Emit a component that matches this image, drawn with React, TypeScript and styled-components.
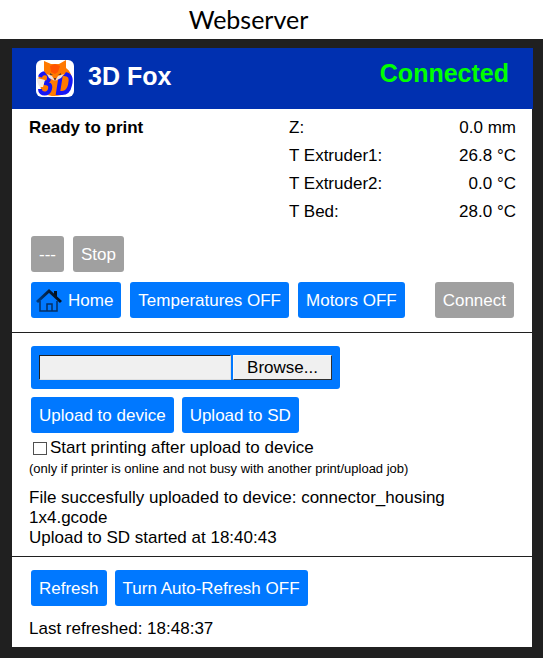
import React from "react";
import styled, { createGlobalStyle } from "styled-components";

const GlobalStyle = createGlobalStyle`
  *, *::before, *::after { box-sizing: border-box; }
  body {
    margin: 0;
    background: #fff;
    color: #000;
    font-family: "Liberation Sans", Arial, sans-serif;
    font-size: 17px;
    line-height: 20px;
  }
`;

const Caption = styled.h1`
  margin: 0;
  padding-right: 48px;
  height: 39px;
  font: 400 25px/39px Lato, Calibri, sans-serif;
  text-align: center;
`;

const Frame = styled.main`
  margin: 0 2px 1px 0;
  padding: 9px 10px 11px 12px;
  background: #202020;
`;

const Header = styled.header`
  display: flex;
  align-items: flex-start;
  justify-content: space-between;
  height: 61px;
  padding: 12px 24px;
  background: #0030b0;
`;

const Brand = styled.div`
  display: flex;
  align-items: center;
  gap: 14px;
  height: 38px;
`;

const BrandName = styled.h2`
  margin: 0;
  color: #fff;
  font-size: 25px;
  line-height: 30px;
  padding-bottom: 6px;
`;

const Status = styled.strong`
  color: #0f0;
  font-size: 25px;
  line-height: 26px;
`;

const Body = styled.div`
  margin-right: 1px;
  background: #fff;
`;

const Section = styled.section<{ $top: number; $bottom: number }>`
  padding: ${(p) => p.$top}px 16px ${(p) => p.$bottom}px 17px;

  & + & { border-top: 1px solid #202020; }
`;

const Overview = styled.div`
  display: grid;
  grid-template-columns: 260px 1fr;
  line-height: 28px;
  margin-bottom: 10px;
`;

const State = styled.strong``;

const Readings = styled.dl`
  margin: 0;
`;

const Reading = styled.div`
  display: flex;
  justify-content: space-between;
`;

const Term = styled.dt``;
const Value = styled.dd`
  margin: 0;
`;

const Row = styled.div<{ $tight?: boolean; $after?: number }>`
  display: flex;
  gap: ${(p) => (p.$tight ? 8 : 9)}px;
  padding: 0 2px;
  margin-bottom: ${(p) => p.$after ?? 10}px;
`;

const Button = styled.button<{ $muted?: boolean; $end?: boolean; $icon?: boolean }>`
  display: flex;
  align-items: center;
  gap: 6px;
  height: 36px;
  padding: ${(p) => (p.$icon ? "2px 8px 0 5px" : "2px 8px 0")};
  margin-left: ${(p) => (p.$end ? "auto" : "0")};
  border: 0;
  border-radius: 3px;
  background: ${(p) => (p.$muted ? "#a0a0a0" : "#0078ff")};
  color: #fff;
  font: inherit;
  white-space: nowrap;
`;

const Picker = styled.div`
  display: flex;
  gap: 2px;
  width: 309px;
  height: 43px;
  margin: 0 2px 8px;
  padding: 9px 8px;
  border-radius: 3px;
  background: #0078ff;
`;

const FileName = styled.input`
  flex: 1;
  min-width: 0;
  height: 25px;
  border: 1px solid;
  border-color: #202020 #e0e0e0 #e0e0e0 #202020;
  background: #f0f0f0;
  font: inherit;
`;

const Browse = styled.button`
  width: 99px;
  height: 25px;
  padding: 0;
  border: 1px solid;
  border-color: #f8f8f8 #303030 #303030 #f8f8f8;
  background: #f0f0f0;
  color: #000;
  font: inherit;
`;

const Check = styled.label`
  display: flex;
  align-items: center;
  gap: 3px;
  padding-left: 4px;
`;

const Tick = styled.input`
  appearance: none;
  width: 14px;
  height: 13px;
  margin: 0;
  border: 1px solid #505050;
  background: #fff;

  &:checked { background: #0078ff; }
`;

const Note = styled.p`
  margin: 0 0 8px;
  font-size: 13px;
  line-height: 22px;
`;

const Message = styled.p`
  margin: 0;
  padding-right: 60px;
`;

const FoxLogo = () => (
  <svg width="38" height="38" viewBox="0 0 38 38" role="img" aria-label="3D Fox">
    <defs>
      <clipPath id="tile"><rect width="38" height="37" rx="6" /></clipPath>
    </defs>
    <g clipPath="url(#tile)">
      <rect width="38" height="37" fill="#fff" />
      <path d="M9 12 27 6c6 3 9 8 9 15-1 9-7 15-18 15-6 0-11-2-13-7L2 18z" fill="#ff7a00" />
      <g fill="none" stroke="#1616f4" strokeWidth="4">
        <path d="M4 17c1-5 10-5 9 1 0 3-2 5-5 5 5 0 7 2 6 6-1 6-10 6-10 0" />
        <path d="M25 14h3c6 0 8 4 6 11-1 5-4 8-8 8h-4z" />
      </g>
      <path d="M1 18 9 20 7 27H4C2 25 1 22 1 18z" fill="#f1e9e5" />
      <path d="M8 1 15 4h8l7-4v12l-2 3-9 6-8-6-3-4z" fill="#ff7900" />
      <path d="m14 6 5-2 5 2-2 6-3 2-4-2z" fill="#ff5200" />
      <path d="m11 14 5 2 3 5-6-3zM28 14l-6 2-3 5 6-3z" fill="#eee2dc" />
      <path d="m14 13 3 2h-3zM25 13l-3 2h3z" fill="#63402b" />
      <path d="M18 18h2l-1 3z" fill="#422d35" />
    </g>
  </svg>
);

const HouseIcon = () => (
  <svg width="26" height="26" viewBox="0 0 26 26" aria-hidden="true">
    <defs>
      <linearGradient id="roof" x1="0" y1="0" x2="1" y2="0">
        <stop offset="0" stopColor="#003c83" />
        <stop offset=".55" stopColor="#061a32" />
        <stop offset="1" stopColor="#04101e" />
      </linearGradient>
    </defs>
    <path d="M4 13v10h17V13M11 23v-7h5v7" fill="none" stroke="#052f64" strokeWidth="1.5" />
    <path d="M18 8V3h3v8z" fill="#04101e" />
    <path d="M1 14 13 3l12 11" fill="none" stroke="url(#roof)" strokeWidth="3" />
  </svg>
);

const readings = [
  ["Z:", "0.0 mm"],
  ["T Extruder1:", "26.8 °C"],
  ["T Extruder2:", "0.0 °C"],
  ["T Bed:", "28.0 °C"],
];

export default function App() {
  return (
    <>
      <GlobalStyle />
      <Caption>Webserver</Caption>
      <Frame>
        <Header>
          <Brand>
            <FoxLogo />
            <BrandName>3D Fox</BrandName>
          </Brand>
          <Status>Connected</Status>
        </Header>
        <Body>
          <Section $top={5} $bottom={4}>
            <Overview>
              <State>Ready to print</State>
              <Readings>
                {readings.map(([term, value]) => (
                  <Reading key={term}>
                    <Term>{term}</Term>
                    <Value>{value}</Value>
                  </Reading>
                ))}
              </Readings>
            </Overview>
            <Row>
              <Button type="button" $muted>---</Button>
              <Button type="button" $muted>Stop</Button>
            </Row>
            <Row>
              <Button type="button" $icon><HouseIcon />Home</Button>
              <Button type="button">Temperatures OFF</Button>
              <Button type="button">Motors OFF</Button>
              <Button type="button" $muted $end>Connect</Button>
            </Row>
          </Section>
          <Section $top={13} $bottom={8}>
            <Picker>
              <FileName type="text" readOnly aria-label="Selected file" />
              <Browse type="button">Browse...</Browse>
            </Picker>
            <Row $tight $after={5}>
              <Button type="button">Upload to device</Button>
              <Button type="button">Upload to SD</Button>
            </Row>
            <Check>
              <Tick type="checkbox" />
              Start printing after upload to device
            </Check>
            <Note>(only if printer is online and not busy with another print/upload job)</Note>
            <Message>File succesfully uploaded to device: connector_housing 1x4.gcode</Message>
            <Message>Upload to SD started at 18:40:43</Message>
          </Section>
          <Section $top={13} $bottom={8}>
            <Row $tight $after={13}>
              <Button type="button">Refresh</Button>
              <Button type="button">Turn Auto-Refresh OFF</Button>
            </Row>
            <Message>Last refreshed: 18:48:37</Message>
          </Section>
        </Body>
      </Frame>
    </>
  );
}
